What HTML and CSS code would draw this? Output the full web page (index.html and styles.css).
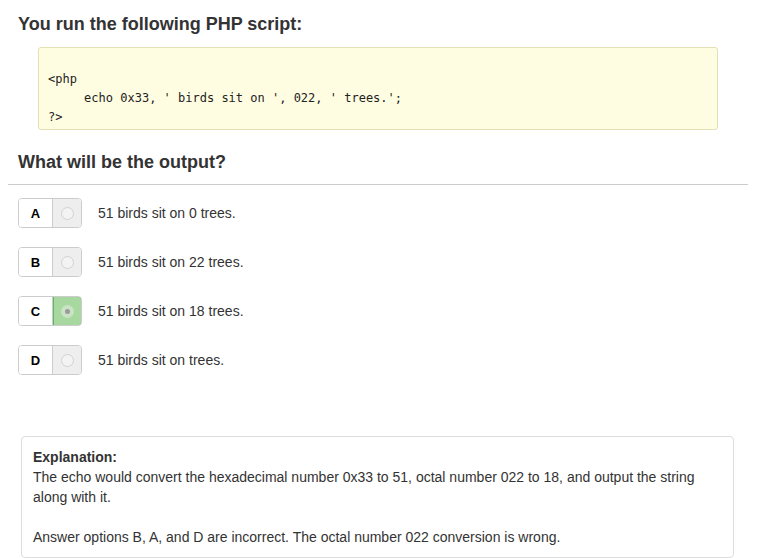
FILE: index.html
```html
<!DOCTYPE html>
<html>
<head>
<meta charset="utf-8">
<link rel="stylesheet" href="styles.css">
</head>
<body>
<div class="page">
  <h2 class="title">You run the following PHP script:</h2>
  <pre class="code">

&lt;php
     echo 0x33, ' birds sit on ', 022, ' trees.';
?&gt;</pre>
  <h2 class="title q">What will be the output?</h2>
  <div class="rule"></div>
  <div class="options">
    <div class="opt">
      <div class="pick"><span class="letter">A</span><span class="radio"><span class="dot"></span></span></div>
      <span class="otext">51 birds sit on 0 trees.</span>
    </div>
    <div class="opt">
      <div class="pick"><span class="letter">B</span><span class="radio"><span class="dot"></span></span></div>
      <span class="otext">51 birds sit on 22 trees.</span>
    </div>
    <div class="opt">
      <div class="pick"><span class="letter">C</span><span class="radio on"><span class="dot"></span></span></div>
      <span class="otext">51 birds sit on 18 trees.</span>
    </div>
    <div class="opt">
      <div class="pick"><span class="letter">D</span><span class="radio"><span class="dot"></span></span></div>
      <span class="otext">51 birds sit on trees.</span>
    </div>
  </div>
  <div class="explain">
    <div class="ehead">Explanation:</div>
    <p>The echo would convert the hexadecimal number 0x33 to 51, octal number 022 to 18, and output the string along with it.</p>
    <p class="gap">Answer options B, A, and D are incorrect. The octal number 022 conversion is wrong.</p>
  </div>
</div>
</body>
</html>
```

FILE: styles.css
```css
html, body {
  margin: 0;
  padding: 0;
  background: #fff;
}
body {
  font-family: "Liberation Sans", Arial, sans-serif;
  color: #333;
  font-size: 14px;
}
.page {
  margin: 0 9px 0 8px;
  padding-top: 12px;
}
.title {
  font-size: 18px;
  font-weight: bold;
  line-height: 24px;
  margin: 0 0 0 10px;
  color: #333;
}
.code {
  margin: 11px 0 0 30px;
  width: 680px;
  box-sizing: border-box;
  background: #fffde1;
  border: 1px solid #e3e0b8;
  border-radius: 3px;
  padding: 3px 9px 2px;
  font-family: "DejaVu Sans Mono", "Liberation Mono", monospace;
  font-size: 12px;
  line-height: 19px;
  color: #222;
}
.q {
  margin-top: 20px;
}
.rule {
  height: 1px;
  background: #ccc;
  margin-top: 10px;
}
.options {
  display: flex;
  flex-direction: column;
  gap: 19px;
  margin: 13px 0 0 10px;
}
.opt {
  display: flex;
  align-items: center;
  gap: 16px;
}
.pick {
  display: flex;
  height: 30px;
  box-sizing: border-box;
  border: 1px solid #ccc;
  border-radius: 4px;
  width: 64px;
  overflow: hidden;
}
.letter {
  width: 33px;
  display: flex;
  align-items: center;
  justify-content: center;
  font-weight: bold;
  font-size: 13px;
  color: #000;
  background: #fff;
  border-right: 1px solid #ccc;
}
.radio {
  flex: 1;
  display: flex;
  align-items: center;
  justify-content: center;
  background: #eee;
}
.radio .dot {
  width: 13px;
  height: 13px;
  border-radius: 50%;
  box-sizing: border-box;
  border: 1px solid #d2d2d2;
  background: #f3f3f3;
}
.radio.on {
  background: #a7d8a0;
  border: 1px solid #5cb85c;
  margin: -1px -1px -1px 0;
  border-radius: 0 4px 4px 0;
}
.letter + .radio.on {
  border-left: 1px solid #5cb85c;
}
.radio.on .dot {
  background: #9a9a9a;
  border: 4px solid #c9e3c4;
}
.otext {
  font-size: 14px;
  color: #333;
}
.explain {
  margin: 61px 14px 0 13px;
  border: 1px solid #ddd;
  border-radius: 4px;
  padding: 10px 11px 10px;
  line-height: 20px;
}
.ehead {
  font-weight: bold;
}
.explain p {
  margin: 0;
}
.explain .gap {
  margin-top: 20px;
}
```
